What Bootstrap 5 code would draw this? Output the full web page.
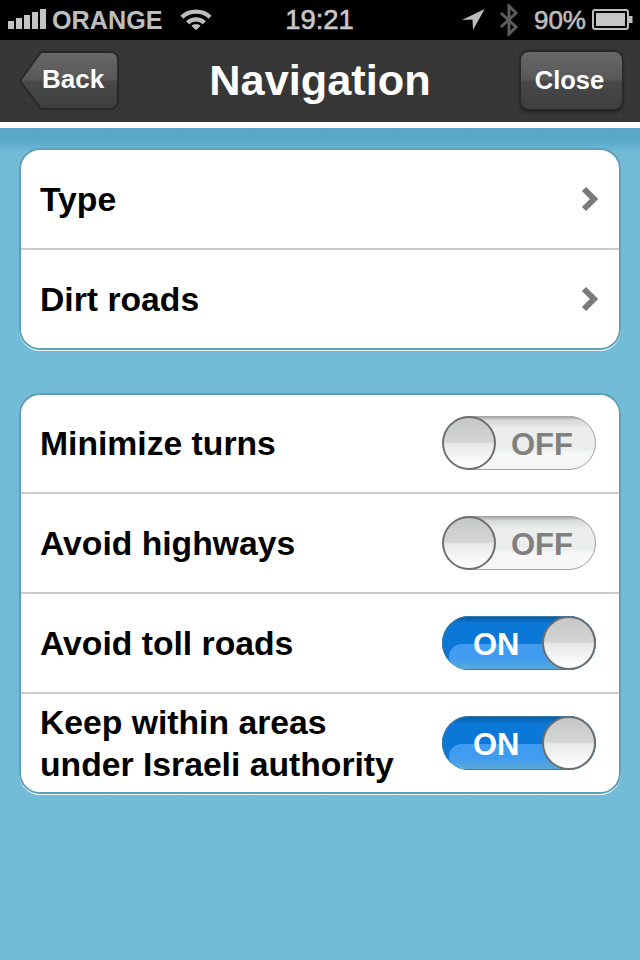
<!DOCTYPE html>
<html lang="en">
<head>
<meta charset="utf-8">
<title>Navigation</title>
<link href="https://cdn.jsdelivr.net/npm/bootstrap@5.3.0/dist/css/bootstrap.min.css" rel="stylesheet">
<style>
html,body{margin:0;height:960px;overflow:hidden}
body{width:640px;font-family:"Liberation Sans",Arial,sans-serif;background:#72bcd8}
.status-strip{height:40px;background:#000;color:#bdbdbd;font-size:26px;font-weight:700;line-height:40px;padding:0 7px 0 8px}
.status-strip svg{display:block;flex:none}
.carrier{margin-left:6px;font-size:25.2px}
.wifi-mark{margin-left:17px}
.clock{position:absolute;left:-1px;right:0;top:0;text-align:center;color:#c8c8c8;font-size:27.4px;font-weight:400;-webkit-text-stroke:.6px #c8c8c8}
.bt-mark{margin-left:14px}
.battery-pct{font-size:26px;margin:0 6px 0 15px;font-weight:400;-webkit-text-stroke:.6px #bdbdbd}
.title-strip{height:82px;background-color:#363636;background-image:radial-gradient(#3d3d3d .7px,transparent .8px);background-size:8px 8px;padding:11px 16px 0 19px;align-items:flex-start!important;border:0;flex-wrap:nowrap!important}
.title-text{position:absolute;left:0;right:0;top:40px;height:82px;line-height:80px;text-align:center;color:#fff;font-size:43.3px;font-weight:700;pointer-events:none}
.bar-btn{height:59px;border-radius:9px;border:1px solid #2a2a2a;background:linear-gradient(#686868 0,#585858 48%,#484848 52%,#3e3e3e 100%);box-shadow:0 2px 3px #1f1f1f,0 -1px 1px #262626;color:#fff;font-size:25.5px;font-weight:700;padding:0 4px 0 0;line-height:56px}
.bar-btn:hover{color:#fff}
.close-btn{width:103px;margin-right:1px}
.back-wrap{position:relative;width:100px;height:61px;flex:none}
.back-wrap svg{display:block}
.back-label{position:absolute;left:23px;top:0;line-height:56px;color:#fff;font-size:26px;font-weight:700}
.white-gap{height:6px;background:#fff}
.sky{height:832px;background-color:#72bcd8;background-image:radial-gradient(#6bb7d3 .7px,transparent .8px),linear-gradient(#59a8c9 0,#5aa9ca 14px,#72bcd8 24px);background-size:9px 9px,100% 100%;padding:20px 19px 0}
.tbl{border:2px solid #5f9fb8;border-radius:21px;background:#fff;overflow:hidden;box-shadow:0 1px 0 #eef6f9;margin-bottom:43px}
.tbl .list-group-item{height:100px;padding:0 20px 0 19px;border:0;border-top:2px solid #cbcbcb;background:transparent;color:#000;font-size:33.7px;font-weight:700;line-height:41px;border-radius:0}
.tbl .list-group-item:first-child{border-top:0;height:98px}
.tbl.second .list-group-item{padding-right:23px}
.tbl.second .list-group-item:first-child{height:97px;padding-bottom:1px}
.toggle{width:154px;height:54px;border-radius:27px;position:relative;flex:none;overflow:hidden;font-weight:700;font-size:31px;line-height:54px}
.toggle-off{background:linear-gradient(#9a9a9a 0,#d6d8d8 8%,#eceeee 24%,#eceeee 62%,#f8f8f8 70%,#f5f5f5 100%);box-shadow:inset 0 0 0 1px #a6a6a6;color:#808080}
.toggle-on{background:linear-gradient(#045a9e 0,#0b78d8 14%,#0b78d8 100%);box-shadow:inset 0 0 0 1px #3b78a8;color:#fff}
.toggle-on::before{content:"";position:absolute;left:7px;right:0;top:28px;bottom:1px;border-radius:16px 0 0 16px;background:linear-gradient(#3f9cf0 0,#3f9cf0 55%,#5ca8d8 100%)}
.toggle .knob{position:absolute;top:0;width:54px;height:54px;border-radius:50%;border:2px solid #6e6e6e;background:linear-gradient(#c6c8c8 0,#d4d6d6 48%,#e8eaea 52%,#fff 100%)}
.toggle-off .knob{left:0}
.toggle-on .knob{right:0}
.toggle-off .cap{position:absolute;left:69px;top:2px}
.toggle-on .cap{position:absolute;left:31px;top:2px}
.two-line{line-height:42px}
</style>
</head>
<body>
<div class="position-relative">
  <div class="status-strip d-flex align-items-center">
    <svg width="38" height="22" viewBox="0 0 38 22" fill="#c4c4c4"><rect y="12" width="6" height="8"/><rect x="8" y="9" width="6" height="11"/><rect x="16" y="6" width="6" height="14"/><rect x="24" y="3" width="6" height="17"/><rect x="32" y="0" width="6" height="20"/></svg>
    <span class="carrier">ORANGE</span>
    <svg class="wifi-mark" width="32" height="24" viewBox="0 0 34 24" fill="none" stroke="#bdbdbd" stroke-width="4.500"><path d="M2 9C10 1 24 1 32 9"/><path d="M8 15C13 10 21 10 26 15"/><path d="M17 23l-5-5c3-2 7-2 10 0z" fill="#bdbdbd" stroke="none"/></svg>
    <div class="clock">19:21</div>
    <div class="ms-auto d-flex align-items-center">
      <svg width="23" height="24" viewBox="0 0 23 24" fill="#bdbdbd"><path d="M22.700 1L0 12l10.500-.5.5 10.500z"/></svg>
      <svg class="bt-mark" width="20" height="32" viewBox="0 0 20 32" fill="none" stroke="#5c5c5c" stroke-width="3"><path d="M2 9l15 14-7 7V2l7 7L2 23"/></svg>
      <span class="battery-pct">90%</span>
      <svg width="41" height="22" viewBox="0 0 41 22"><rect x="1" y="1" width="35" height="19" rx="2" fill="none" stroke="#bdbdbd" stroke-width="2"/><rect x="4" y="4" width="29" height="13" fill="#c6c6c6"/><rect x="37" y="7" width="3.500" height="7" fill="#bdbdbd"/></svg>
    </div>
  </div>
  <nav class="navbar title-strip d-flex justify-content-between">
    <a class="back-wrap text-decoration-none" href="#">
      <svg width="100" height="61" viewBox="0 0 100 61"><defs><linearGradient id="backfill" x1="0" y1="0" x2="0" y2="1"><stop offset="0" stop-color="#686868"/><stop offset=".48" stop-color="#585858"/><stop offset=".52" stop-color="#484848"/><stop offset="1" stop-color="#3e3e3e"/></linearGradient></defs><path d="M22 1H92a7 7 0 0 1 7 7V50a8 8 0 0 1-8 8H22L1 30z" fill="url(#backfill)" stroke="#292929" stroke-width="2" stroke-linejoin="round"/></svg>
      <span class="back-label">Back</span>
    </a>
    <a class="btn bar-btn close-btn" href="#">Close</a>
  </nav>
  <div class="title-text">Navigation</div>
  <div class="white-gap"></div>
  <main class="sky">
    <div class="list-group tbl">
      <a class="list-group-item d-flex align-items-center justify-content-between text-decoration-none" href="#"><span>Type</span>
        <svg width="20" height="28" viewBox="0 0 20 28" fill="none" stroke="#7b7b7b" stroke-width="6"><path d="M5 4l10 10L5 24"/></svg></a>
      <a class="list-group-item d-flex align-items-center justify-content-between text-decoration-none" href="#"><span>Dirt roads</span>
        <svg width="20" height="28" viewBox="0 0 20 28" fill="none" stroke="#7b7b7b" stroke-width="6"><path d="M5 4l10 10L5 24"/></svg></a>
    </div>
    <div class="list-group tbl second">
      <div class="list-group-item d-flex align-items-center justify-content-between"><span>Minimize turns</span><div class="toggle toggle-off"><span class="cap">OFF</span><div class="knob"></div></div></div>
      <div class="list-group-item d-flex align-items-center justify-content-between"><span>Avoid highways</span><div class="toggle toggle-off"><span class="cap">OFF</span><div class="knob"></div></div></div>
      <div class="list-group-item d-flex align-items-center justify-content-between"><span>Avoid toll roads</span><div class="toggle toggle-on"><span class="cap">ON</span><div class="knob"></div></div></div>
      <div class="list-group-item d-flex align-items-center justify-content-between"><span class="two-line">Keep within areas<br>under Israeli authority</span><div class="toggle toggle-on"><span class="cap">ON</span><div class="knob"></div></div></div>
    </div>
  </main>
</div>
</body>
</html>
